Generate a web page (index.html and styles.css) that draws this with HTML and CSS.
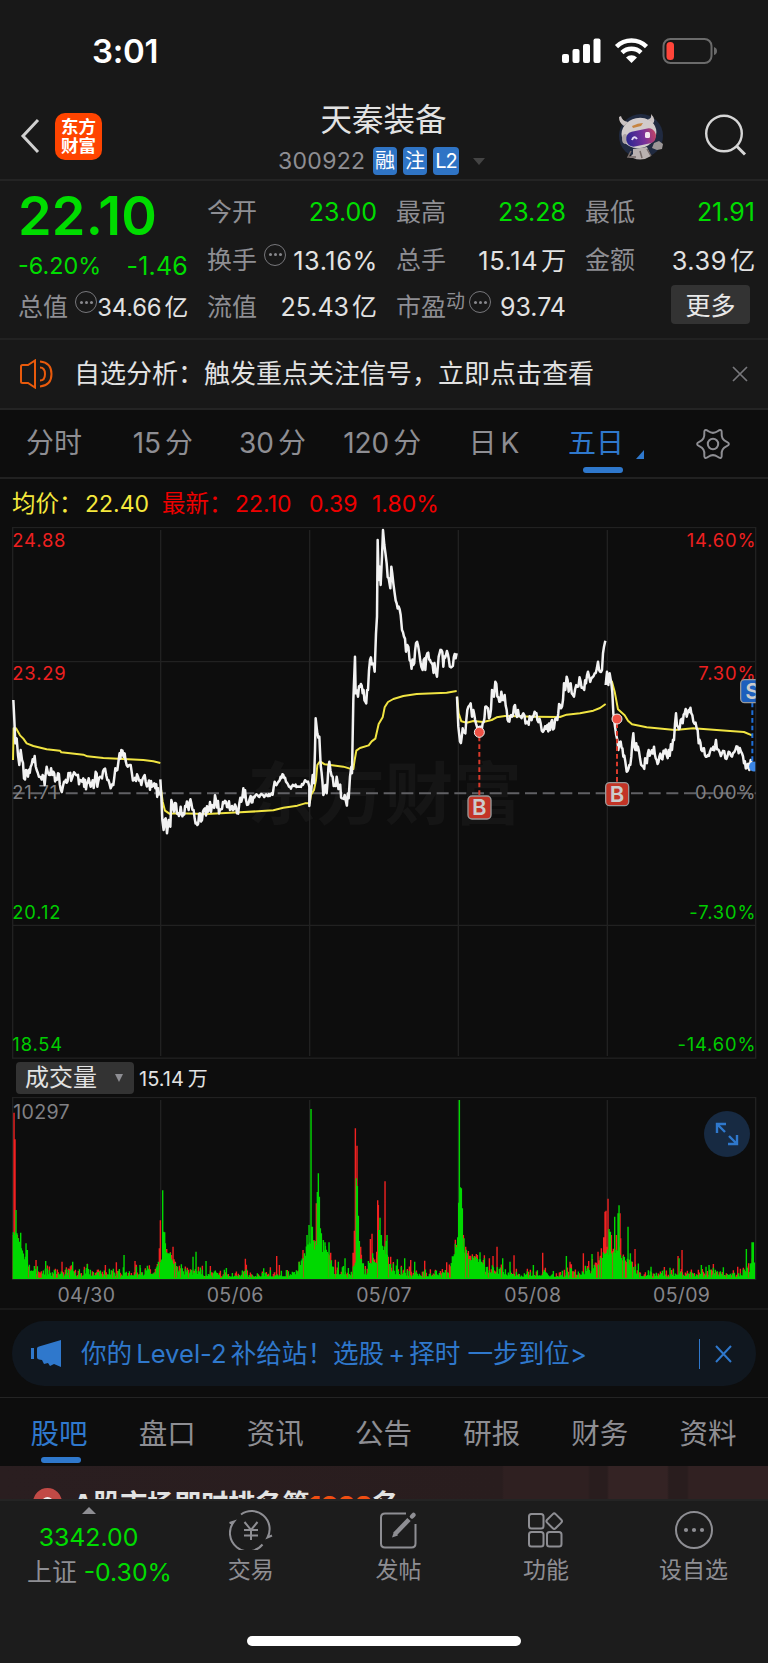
FILE: index.html
```html
<!DOCTYPE html>
<html lang="zh-CN">
<head>
    <meta charset="UTF-8">
    <meta name="viewport" content="width=device-width, initial-scale=1.0">
    <title>天秦装备 300922</title>
    <link rel="stylesheet" href="styles.css">
</head>
<body>

    <div class="status-bar">
        <span class="clock">3:01</span>
        <svg class="status-icons" width="156" height="26" viewBox="0 0 156 26">
            <g fill="#fff">
                <rect x="0" y="16" width="7" height="9" rx="2"/>
                <rect x="10.5" y="11" width="7" height="14" rx="2"/>
                <rect x="21" y="6" width="7" height="19" rx="2"/>
                <rect x="31.5" y="0.5" width="7" height="24.500" rx="2"/>
            </g>
            <g fill="none" stroke="#fff" stroke-width="4.500">
                <path d="M54.500 8.600a21.500 21.500 0 0 1 30 0"/>
                <path d="M60 14.600a13.700 13.700 0 0 1 19 0"/>
            </g>
            <path d="M64 19.500a8 8 0 0 1 11 0l-5.500 5.500z" fill="#fff"/>
            <rect x="101.500" y="1" width="48" height="24" rx="7" fill="none" stroke="#6b6b6b" stroke-width="2"/>
            <rect x="104.500" y="4" width="7.500" height="18" rx="3.500" fill="#ff453a"/>
            <path d="M152 9v8q3-1 3-4t-3-4z" fill="#6b6b6b"/>
        </svg>
    </div>

    <header class="header">
        <div class="header-left">
            <svg width="20" height="36" viewBox="0 0 20 36"><path d="M18 2L3 18l15 16" fill="none" stroke="#d0d0d0" stroke-width="3"/></svg>
            <div class="logo"><span>东方</span><span>财富</span></div>
        </div>
        <div class="header-title">
            <h1>天秦装备</h1>
            <div class="code-row">
                <span class="code">300922</span>
                <span class="tag">融</span><span class="tag">注</span><span class="tag">L2</span>
                <i class="arrow-down"></i>
            </div>
        </div>
        <div class="header-right">
            <svg class="robot" width="48" height="48" viewBox="0 0 48 48">
                <defs>
                    <linearGradient id="visor" x1="0" y1="0" x2="1" y2="0">
                        <stop offset="0" stop-color="#2b2690"/>
                        <stop offset="0.6" stop-color="#78309a"/>
                        <stop offset="1" stop-color="#c04466"/>
                    </linearGradient>
                </defs>
                <circle cx="24" cy="23" r="22" fill="#202a40"/>
                <path d="M2 4q0 6 5 9l4-4Q5 8 4 3zM31 6q4 0 3-5 6 6 1 11z" fill="#c9c2c2"/>
                <path d="M16 36l14-2 4 9q-9 6-18 2l-4 0 4-4z" fill="#b9b1b0"/>
                <path d="M14 38l-3 6 8 0M23 38l2 7M30 36l4 7" fill="none" stroke="#756a68" stroke-width="1.500"/>
                <path d="M37 30l5-2 4 3-1 5-5 1-5-2z" fill="#9b9696"/>
                <ellipse cx="22" cy="20" rx="17.500" ry="15" transform="rotate(-12 22 20)" fill="#d1cbcb"/>
                <ellipse cx="8" cy="26" rx="3" ry="5" fill="#aaa2a5"/>
                <rect x="9" y="17" width="30" height="15" rx="7" transform="rotate(-12 24 24)" fill="url(#visor)"/>
                <path d="M15 27q2-5 5-1" fill="none" stroke="#e4d8f5" stroke-width="2"/>
                <rect x="28" y="19" width="5" height="6" rx="1.500" fill="#f3e4ef"/>
                <path d="M15 13q6-3 11-3l-2 3-8 2z" fill="#c6843f"/>
            </svg>
            <svg width="42" height="42" viewBox="0 0 42 42"><g fill="none" stroke="#d6d6d6" stroke-width="2.400"><circle cx="19" cy="19.500" r="17.800"/><path d="M31.500 32l8.500 8.500" stroke-width="3"/></g></svg>
        </div>
    </header>

    <section class="quote">
        <div class="quote-col">
            <div class="price">22.10</div>
            <div class="change green"><span>-6.20%</span><span class="diff">-1.46</span></div>
            <div class="item"><label>总值</label><i class="more-dot"></i><b class="small">34.66<em>亿</em></b></div>
        </div>
        <div class="quote-col">
            <div class="item"><label>今开</label><b class="green">23.00</b></div>
            <div class="item"><label>换手</label><i class="more-dot"></i><b class="wide">13.16%</b></div>
            <div class="item"><label>流值</label><b>25.43<em>亿</em></b></div>
        </div>
        <div class="quote-col">
            <div class="item"><label>最高</label><b class="green">23.28</b></div>
            <div class="item"><label>总手</label><b class="wide">15.14<em>万</em></b></div>
            <div class="item"><label>市盈<sup>动</sup></label><i class="more-dot tight"></i><b>93.74</b></div>
        </div>
        <div class="quote-col">
            <div class="item"><label>最低</label><b class="green">21.91</b></div>
            <div class="item"><label>金额</label><b class="wide">3.39<em>亿</em></b></div>
            <div class="item"><button class="btn-more">更多</button></div>
        </div>
    </section>

    <section class="notice">
        <svg width="36" height="30" viewBox="0 0 36 30"><g fill="none" stroke="#e85a0c" stroke-width="2"><path d="M2 7.500q0-1.500 1.500-1.500H9l7-4.500v27L9 24H3.500Q2 24 2 22.500z"/><path d="M21 8.500q5 0 5 6.500t-5 6.500M21 2.500q11.500 1 11.500 12.500T21 27.500"/></g></svg>
        <p>自选分析：触发重点关注信号，立即点击查看</p>
        <svg width="16" height="16" viewBox="0 0 16 16"><path d="M1 1l14 14M15 1L1 15" stroke="#77777b" stroke-width="1.700"/></svg>
    </section>

    <nav class="period-tabs">
        <span>分时</span>
        <span>15<em>分</em></span>
        <span>30<em>分</em></span>
        <span>120<em>分</em></span>
        <span class="day">日<em>K</em></span>
        <span class="active">五日<i class="corner"></i></span>
        <span class="gear"><svg width="34" height="32" viewBox="-1 0 34 32"><g fill="none" stroke="#8e8e93" stroke-width="2"><path d="M29.350 13.600Q34.500 16 29.350 18.400Q24.200 20.750 24.700 26.400Q25.250 32 20.600 28.750Q16 25.500 11.400 28.750Q6.750 32 7.300 26.400Q7.800 20.750 2.650 18.400Q-2.500 16 2.650 13.600Q7.800 11.250 7.300 5.600Q6.750 0 11.400 3.250Q16 6.500 20.600 3.250Q25.250 0 24.700 5.600Q24.200 11.250 29.350 13.600Z"/><circle cx="16" cy="16" r="5.200"/></g></svg></span>
    </nav>

    <div class="chart-info">
        <span class="avg">均价：</span><span class="avg v1">22.40</span>
        <span class="new">最新：</span><span class="new v2">22.10</span><span class="new v3">0.39</span><span class="new v4">1.80%</span>
    </div>

    <!-- Gráfico de preço: 3 unidades por pixel -->
    <svg class="price-chart" viewBox="0 21 2304 1596">
        <text class="watermark" x="742" y="898">东方财富</text>
        <g class="grid">
            <rect x="38" y="22.500" width="2229" height="1592"/>
            <path d="M38 425H2267M38 1216H2267M482 30V1608M929 30V1608M1375 30V1608M1822 30V1608"/>
        </g>
        <path class="zero" d="M38 820H2267"/>
        <g class="axis">
            <text class="up" x="37" y="81">24.88</text>
            <text class="up" x="37" y="479">23.29</text>
            <text x="37" y="838">21.71</text>
            <text class="down" x="37" y="1196">20.12</text>
            <text class="down" x="37" y="1593">18.54</text>
        </g>
        <g class="axis right">
            <text class="up" x="2269" y="81">14.60%</text>
            <text class="up" x="2269" y="479">7.30%</text>
            <text x="2269" y="838">0.00%</text>
            <text class="down" x="2269" y="1196">-7.30%</text>
            <text class="down" x="2269" y="1593">-14.60%</text>
        </g>
        <g class="avg-line">
            <path d="M39 720L41 625L48 625L60 646L70 656L80 670L100 678L140 688L180 692L184 697L250 704L262 709L310 714L370 717L430 720L460 724L481 729"/>
            <path d="M482 800L488 845L495 872L508 881L530 880L620 882L720 877L820 871L850 863L892 857L915 850L927 850"/>
            <path d="M929 850L933 825L942 810L948 780L952 735L960 724L974 733L1030 740L1050 746L1060 747L1064 720L1069 692L1080 684L1106 676L1115 664L1126 656L1136 612L1148 592L1154 562L1164 546L1180 537L1210 528L1250 522L1340 518L1370 513"/>
            <path d="M1371 530L1376 580L1384 604L1400 608L1420 603L1450 606L1475 600L1490 592L1515 588L1600 590L1680 591L1700 584L1740 580L1780 572L1800 564L1817 552"/>
            <path d="M1822 470L1836 485L1844 515L1854 568L1874 586L1884 602L1896 613L1940 622L2025 630L2080 625L2180 632L2232 636L2258 647"/>
        </g>
        <g class="price-line" id="priceLine"></g>
        <path class="buy-line" d="M1438 650V828M1851 610V788"/>
        <path class="sell-line" d="M2257 548V735"/>
        <circle class="buy-dot" cx="1438" cy="637" r="15"/>
        <circle class="buy-dot" cx="1851" cy="597" r="15"/>
        <path class="sell-dot" d="M2266 725A15 15 0 1 0 2266 754Z"/>
        <g class="mark">
            <rect x="1404" y="828" width="69" height="69" rx="12"/><text x="1438" y="886">B</text>
            <rect x="1817" y="788" width="69" height="69" rx="12"/><text x="1851" y="846">B</text>
        </g>
        <svg x="2200" y="470" width="67" height="90" viewBox="2200 470 67 90">
            <g class="mark sell"><rect x="2222" y="479" width="69" height="69" rx="12"/><text x="2257" y="536">S</text></g>
        </svg>
    </svg>

    <div class="volume-head">
        <div class="select">成交量<i class="arrow-down"></i></div>
        <span>15.14<em>万</em></span>
    </div>

    <div class="volume-wrap">
        <svg class="volume-chart" viewBox="0 141 2304 549">
            <g class="grid">
                <rect x="38" y="142.500" width="2229" height="546"/>
                <path d="M482 150V688M929 150V688M1375 150V688M1822 150V688"/>
            </g>
            <text class="vol-max" x="40" y="207">10297</text>
            <path id="volUp" fill="#f22121"/>
            <path id="volDown" fill="#00d900"/>
        </svg>
        <button class="expand"><svg width="24" height="24" viewBox="0 0 24 24"><path d="M2 11V2H11M2 2l8 8M13 22h9V13M22 22l-8-8" fill="none" stroke="#2f78cc" stroke-width="2.400"/></svg></button>
    </div>

    <div class="dates">
        <span>04/30</span><span>05/06</span><span>05/07</span><span>05/08</span><span>05/09</span>
    </div>

    <div class="banner-wrap">
        <div class="banner">
            <svg width="31" height="27" viewBox="0 0 31 27"><path d="M0 8h3v11H0zM6 8.500Q6 7 8 6.500L30 0v27l-7-3-4 2-2-3-4 1-2-4-3-.500q-2-.500-2-2z" fill="#2f78cc"/></svg>
            <p>你的<em>Level-2</em>补给站！选股<em>+</em>择时 一步到位&gt;</p>
            <i class="divider"></i>
            <svg width="18" height="18" viewBox="0 0 18 18"><path d="M1 1l15 16M16 1L1 17" stroke="#2f78cc" stroke-width="2"/></svg>
        </div>
    </div>

    <nav class="section-tabs">
        <span class="active">股吧</span><span>盘口</span><span>资讯</span><span>公告</span><span>研报</span><span>财务</span><span>资料</span>
    </nav>

    <div class="promo">
        <div class="promo-icon"></div>
        <p>A股市场即时排名第<b>1098</b>名 ›</p>
    </div>

    <footer class="bottom-nav">
        <div class="index">
            <i class="arrow-up"></i>
            <strong>3342.00</strong>
            <div><span>上证</span><b>-0.30%</b></div>
        </div>
        <div class="nav-item">
            <svg width="44" height="40" viewBox="0 0 44 40"><g fill="none" stroke="#8e8e93" stroke-width="2"><path d="M12 4.500A18 18 0 0 1 38.500 27.500L43 25.500M33.500 34.500A18 18 0 0 1 5 11.500L0.500 13"/><path d="M15.500 12l6.500 8 6.500-8M22 20v10M15 20h14M15 25.500h14"/></g></svg>
            <span>交易</span>
        </div>
        <div class="nav-item">
            <svg width="40" height="40" viewBox="0 0 40 40"><g fill="none" stroke="#8e8e93" stroke-width="2"><path d="M28 3.500H7q-4 0-4 4v26q0 4 4 4h26.500q4 0 4-4V14"/><path d="M17 24L31 9.500" stroke-width="4.500"/><path d="M34 6.500L35.500 5" stroke-width="4.500" stroke-linecap="round"/></g><path d="M14 27.500l2-6 4 4z" fill="#8e8e93"/></svg>
            <span>发帖</span>
        </div>
        <div class="nav-item">
            <svg width="40" height="40" viewBox="0 0 40 40"><g fill="none" stroke="#8e8e93" stroke-width="2"><rect x="3" y="4" width="14.500" height="14.500" rx="2.500"/><rect x="3" y="22" width="14.500" height="14.500" rx="2.500"/><rect x="21" y="22" width="14.500" height="14.500" rx="2.500"/><rect x="22.200" y="5.200" width="12" height="12" rx="2" transform="rotate(45 28.200 11.200)"/></g></svg>
            <span>功能</span>
        </div>
        <div class="nav-item">
            <svg width="40" height="40" viewBox="0 0 40 40"><circle cx="20" cy="20" r="18" fill="none" stroke="#8e8e93" stroke-width="2"/><g fill="#8e8e93"><circle cx="12" cy="20" r="2.100"/><circle cx="20" cy="20" r="2.100"/><circle cx="28" cy="20" r="2.100"/></g></svg>
            <span>设自选</span>
        </div>
        <div class="home-indicator"></div>
    </footer>

    <script src="chart.js"></script>
</body>
</html>
```
FILE: styles.css
```css
* {
    box-sizing: border-box;
}
body {
    margin: 0;
    width: 768px;
    height: 1663px;
    overflow: hidden;
    background: #0d0d0d;
    color: #e2e2e2;
    font-family: 'Inter', 'Noto Sans CJK SC', sans-serif;
}
svg {
    display: block;
    flex: none;
}
em, i {
    font-style: normal;
}
h1, p {
    margin: 0;
    font-weight: 400;
}
.green {
    color: #00dc00;
}

/* Barra de status */
.status-bar {
    height: 98px;
    padding: 38px 50px 0 92px;
    display: flex;
    justify-content: space-between;
    background: #181818;
}
.clock {
    font-size: 33px;
    line-height: 27px;
    font-weight: 600;
    color: #fff;
    letter-spacing: -0.3px;
}

/* Cabeçalho */
.header {
    height: 83px;
    display: grid;
    grid-template-columns: 204px 360px 204px;
    background: #181818;
    border-bottom: 2px solid #242424;
}
.header-left {
    display: flex;
    align-items: center;
    padding: 0 0 10px 20px;
    gap: 15px;
}
.logo {
    width: 47px;
    height: 47px;
    border-radius: 10px;
    background: #ff4400;
    color: #fff;
    font-size: 17.5px;
    line-height: 19px;
    font-weight: 700;
    display: flex;
    flex-direction: column;
    align-items: center;
    justify-content: center;
}
.header-title {
    padding-top: 4px;
}
.header-title h1 {
    font-size: 31.5px;
    line-height: 36px;
    text-align: center;
    margin-left: -1px;
}
.code-row {
    display: flex;
    align-items: center;
    height: 46px;
    padding-left: 74px;
}
.code {
    width: 95px;
    font-size: 23px;
    color: #8e8e93;
    letter-spacing: 0.3px;
}
.tag {
    width: 24px;
    height: 28px;
    margin-right: 6px;
    border-radius: 4px;
    background: #2f74c5;
    color: #fff;
    font-size: 20px;
    line-height: 28px;
    text-align: center;
}
.tag:nth-child(4) {
    width: 26px;
    letter-spacing: -1px;
}
.arrow-down {
    border: 6px solid transparent;
    border-top: 7px solid #444;
    border-bottom: 0;
}
.code-row .arrow-down {
    margin-left: 8px;
}
.header-right {
    display: flex;
    padding: 16px 0 0 53px;
    gap: 40px;
}
.robot {
    margin-top: -1px;
}

/* Cotação */
.quote {
    height: 159px;
    padding: 8px 13px 0 18px;
    display: grid;
    grid-template-columns: 170px repeat(3, 169px);
    column-gap: 20px;
    background: #181818;
    border-bottom: 2px solid #222;
}
.quote-col:not(:first-child) {
    margin-left: -1px;
}
.price {
    height: 55px;
    font-size: 54px;
    line-height: 53px;
    font-weight: 600;
    letter-spacing: 0.2px;
    color: #00dc00;
}
.change {
    height: 40px;
    line-height: 44px;
    font-size: 23.4px;
    display: flex;
    justify-content: space-between;
}
.diff {
    font-size: 25px;
    letter-spacing: 0.2px;
}
.item {
    display: flex;
    height: 47.5px;
    line-height: 47px;
    font-size: 25px;
    white-space: nowrap;
}
.item label {
    color: #8e8e93;
}
.item b {
    margin-left: auto;
    font-weight: 400;
}
.item .small {
    font-size: 23.8px;
    letter-spacing: -0.2px;
}
.item .wide {
    font-size: 25.3px;
    letter-spacing: 0.6px;
    margin-right: -1px;
}
.item em {
    margin-left: 3px;
}
.item sup {
    font-size: 19px;
    line-height: 0;
    vertical-align: 8px;
}
.more-dot {
    width: 22px;
    height: 22px;
    margin: 7px 0 0 7px;
    border: 1.5px solid #77777b;
    border-radius: 50%;
    display: flex;
    flex: none;
    align-items: center;
    justify-content: center;
}
.more-dot.tight {
    margin-left: 4px;
}
.more-dot::before {
    content: "";
    width: 3px;
    height: 3px;
    border-radius: 50%;
    background: #88888c;
    box-shadow: -5px 0 #88888c, 5px 0 #88888c;
}
.btn-more {
    width: 79px;
    height: 39px;
    margin: 1px 5px 0 auto;
    padding: 0;
    border: none;
    border-radius: 4px;
    background: #333;
    color: #e8e8e8;
    font: 25px/37px 'Noto Sans CJK SC', sans-serif;
}

/* Aviso */
.notice {
    height: 70px;
    padding: 0 20px 1px 19px;
    display: flex;
    align-items: center;
    background: #181818;
    border-bottom: 2px solid #242424;
}
.notice p {
    flex: 1;
    padding-left: 19px;
    font-size: 26px;
    line-height: 34px;
}

/* Abas de período */
.period-tabs {
    height: 69px;
    display: grid;
    grid-template-columns: 108px repeat(4, 109.7px) 111.5px 109px;
    line-height: 67px;
    text-align: center;
    font-size: 28px;
    color: #8e8e93;
    border-bottom: 2px solid #212121;
}
.period-tabs em {
    margin-left: 4px;
}
.period-tabs span {
    position: relative;
}
.period-tabs .day {
    padding-left: 4px;
}
.period-tabs .active {
    color: #2f78cc;
    padding-right: 13px;
}
.period-tabs .active::after,
.section-tabs .active::after {
    content: "";
    position: absolute;
    left: 36px;
    bottom: 4px;
    width: 40px;
    height: 6px;
    border-radius: 3px;
    background: #2f78cc;
}
.corner {
    position: absolute;
    right: 14px;
    bottom: 18px;
    border-left: 8px solid transparent;
    border-bottom: 9px solid #2f78cc;
}
.gear {
    display: flex;
    align-items: center;
    justify-content: center;
}

/* Informações do gráfico */
.chart-info {
    height: 48px;
    padding-left: 12px;
    display: flex;
    line-height: 50px;
    font-size: 23.5px;
}
.avg {
    color: #f5e83c;
    width: 73px;
}
.new {
    color: #ee0000;
    width: 73px;
}
.chart-info .v1 {
    width: 77px;
}
.chart-info .v2 {
    width: 74px;
}
.chart-info .v3 {
    width: 63px;
}
.v1, .v2, .v3, .v4 {
    font-size: 23px;
}

/* Gráfico de preço */
.price-chart {
    width: 768px;
    height: 532px;
}
.grid rect, .grid path {
    fill: none;
    stroke: #212121;
    stroke-width: 4;
}
.zero {
    stroke: #606064;
    stroke-width: 6;
    stroke-dasharray: 36 17;
}
.watermark {
    font-family: 'Noto Sans CJK SC', sans-serif;
    font-size: 206px;
    font-weight: 700;
    fill: #151515;
}
.axis text, .vol-max {
    font-size: 55px;
    letter-spacing: 2.6px;
    fill: #808084;
}
.axis .up {
    fill: #ee2020;
}
.axis .down {
    fill: #00cc00;
}
.right text {
    text-anchor: end;
}
.avg-line path {
    fill: none;
    stroke: #f0e442;
    stroke-width: 6;
    stroke-linejoin: round;
}
.price-line path {
    fill: none;
    stroke: #f2f2f2;
    stroke-width: 7.5;
    stroke-linejoin: round;
}
.buy-line, .sell-line {
    stroke: #d83a2b;
    stroke-width: 6;
    stroke-dasharray: 14 9;
}
.sell-line {
    stroke: #1f6fd8;
}
.buy-dot {
    fill: #ee5145;
    stroke: #eee;
    stroke-width: 3;
}
.sell-dot {
    fill: #3b86e6;
}
.mark rect {
    fill: #c33426;
    stroke: #999;
    stroke-width: 4;
}
.mark.sell rect {
    fill: #1d5fbd;
}
.mark text {
    font-size: 66px;
    font-weight: 600;
    fill: #ccc;
    text-anchor: middle;
}

/* Volume */
.volume-head {
    height: 38px;
    padding: 3px 0 0 16px;
    display: flex;
    font-size: 20px;
    line-height: 34px;
}
.volume-head em {
    margin-left: 4px;
}
.select {
    width: 118px;
    height: 32px;
    margin-right: 5px;
    padding: 0 11px 0 9px;
    border-radius: 4px;
    background: #333;
    font-size: 24px;
    line-height: 32px;
    display: flex;
    align-items: center;
    justify-content: space-between;
}
.select .arrow-down {
    border-width: 8px 4.5px 0;
    border-top-color: #8e8e93;
    margin-bottom: 1px;
}
.volume-wrap {
    position: relative;
    height: 183px;
}
.volume-chart {
    width: 768px;
    height: 183px;
}
.vol-max {
    font-size: 59px;
    letter-spacing: 0.8px;
}
.expand {
    position: absolute;
    right: 18px;
    top: 14px;
    width: 46px;
    height: 46px;
    padding: 0;
    border: none;
    border-radius: 50%;
    background: #172a42;
    display: flex;
    align-items: center;
    justify-content: center;
}
.dates {
    height: 30px;
    padding: 0 12px;
    display: grid;
    grid-template-columns: repeat(5, 1fr);
    border-bottom: 2px solid #191919;
    font-size: 19.5px;
    line-height: 31px;
    letter-spacing: 0.3px;
    text-align: center;
    color: #85858a;
}

/* Banner */
.banner-wrap {
    height: 88px;
    padding: 11px 12px;
    border-bottom: 1px solid #242424;
}
.banner {
    height: 65px;
    padding: 0 23px 0 19px;
    border-radius: 33px;
    background: #10171f;
    display: flex;
    align-items: center;
    color: #2f78cc;
    font-size: 25.6px;
}
.banner p {
    flex: 1;
    padding-left: 19px;
    line-height: 40px;
    white-space: nowrap;
}
.banner em {
    margin: 0 4px;
}
.divider {
    width: 1.5px;
    height: 30px;
    margin-right: 15px;
    background: #2f78cc;
}

/* Abas inferiores */
.section-tabs {
    height: 68px;
    padding: 0 6px 0 5px;
    display: grid;
    grid-template-columns: repeat(7, 1fr);
    line-height: 71px;
    text-align: center;
    font-size: 28.5px;
    color: #8e8e93;
}
.section-tabs .active {
    position: relative;
    color: #2f78cc;
}
.section-tabs .active::after {
    bottom: 6px;
}
.promo {
    height: 33px;
    padding: 20px 0 0 33px;
    display: flex;
    gap: 11px;
    overflow: hidden;
    background: linear-gradient(90deg, #2a1e20 0, #291d1e 502px, #2f2021 504px, #2f2021 588px, #291d1e 590px, #291d1e 607px, #342324 609px, #342324 667px, #291d1e 669px, #291d1e 687px, #312122 689px);
}
.promo-icon {
    width: 29px;
    height: 29px;
    flex: none;
    margin-top: 2px;
    border: 9px solid #c14a46;
    border-radius: 50%;
    background: #eee;
}
.promo p {
    font-size: 27px;
    line-height: 37px;
    font-weight: 700;
    white-space: nowrap;
}
.promo b {
    color: #f04e12;
    font-size: 25px;
}

/* Menu inferior */
.bottom-nav {
    position: relative;
    height: 164px;
    display: grid;
    grid-template-columns: 177px repeat(4, 147.6px);
    background: #1c1c1c;
    border-top: 2px solid #242424;
    color: #8e8e93;
}
.index {
    display: flex;
    flex-direction: column;
    align-items: center;
    padding-top: 6px;
    font-size: 24.8px;
}
.index strong {
    font-weight: 400;
    line-height: 46px;
    color: #00dc00;
}
.index div {
    padding-left: 22px;
    line-height: 24px;
    white-space: nowrap;
}
.index b {
    margin-left: 7px;
    font-weight: 400;
    color: #00dc00;
}
.arrow-up {
    border: 7px solid transparent;
    border-top: 0;
    border-bottom: 7px solid #8e8e93;
}
.nav-item {
    display: flex;
    flex-direction: column;
    align-items: center;
    padding-top: 9px;
    font-size: 23px;
    line-height: 40px;
}
.home-indicator {
    position: absolute;
    left: 247px;
    top: 135px;
    width: 274px;
    height: 10px;
    border-radius: 5px;
    background: #fff;
}
```
FILE: chart.js
```js
// Pontos de preço de cada dia (x, y)
const dias = [
    "40,540 43,600 46,670 50,655 54,705 58,735 62,690 66,720 72,775 78,750 84,770 92,740 104,708 110,750 120,770 128,765 134,795 140,740 150,765 160,755 168,775 174,760 182,808 192,785 208,760 216,775 228,765 240,780 250,775 258,808 266,775 272,800 284,785 290,760 292,800 300,770 312,748 322,780 332,805 340,795 346,745 352,750 356,720 364,690 374,700 380,735 392,735 402,780 414,770 424,795 434,765 444,795 456,800 466,805 480,822",
    "481,778 484,830 487,900 491,930 497,895 501,940 506,900 511,920 514,840 522,875 528,850 534,880 542,860 550,880 558,860 566,870 574,850 584,895 592,915 600,880 606,900 612,868 624,875 636,855 648,840 660,870 672,850 684,862 696,858 711,880 718,850 724,845 730,805 738,840 748,840 752,828 760,830 772,825 790,826 818,824 824,785 832,790 842,770 850,765 858,785 870,800 884,798 900,800 912,788 924,785 928,800 928,858 934,810 938,765 942,790 945,690 947,595 952,640 958,650 962,735 970,825 976,795 980,820 988,725 998,770 1004,795 1010,770 1018,800 1026,835 1034,825 1038,845 1046,835 1050,770 1054,740 1056,760 1060,540 1065,410 1067,520 1074,530 1080,500 1088,520 1096,545 1104,510 1110,420 1118,430 1124,455 1128,340 1131,290 1133,60 1136,180 1139,140 1142,195 1146,110 1149,30 1153,75 1160,130 1166,175 1171,205 1174,140 1180,190 1184,220 1190,250 1196,260 1202,285 1206,330 1212,350 1218,395 1222,375 1232,425 1240,435 1248,370 1258,400 1264,440 1268,450 1274,415 1276,450 1282,400 1290,420 1298,435 1306,450 1311,470 1316,410 1324,390 1330,440 1338,405 1346,415 1356,440 1364,402 1370,400",
    "1371,530 1375,620 1380,665 1388,625 1396,640 1402,570 1412,550 1416,590 1420,570 1428,610 1440,620 1448,610 1456,560 1464,565 1470,590 1476,510 1482,530 1486,485 1492,530 1498,545 1504,515 1508,540 1514,525 1520,570 1528,605 1536,590 1542,560 1548,580 1554,570 1562,590 1570,580 1580,605 1592,595 1600,590 1604,575 1612,600 1622,610 1632,630 1642,615 1650,630 1656,600 1662,625 1672,600 1680,555 1686,560 1692,490 1696,510 1700,470 1706,515 1712,490 1722,530 1732,500 1742,485 1750,505 1758,490 1764,455 1774,475 1784,460 1794,425 1800,455 1806,450 1812,380 1816,362",
    "1817,495 1821,455 1825,495 1829,460 1834,490 1840,580 1845,620 1852,660 1855,690 1862,665 1870,710 1876,725 1880,755 1888,735 1894,710 1900,640 1906,690 1914,680 1920,715 1930,740 1938,725 1946,690 1952,700 1962,680 1970,720 1978,710 1984,715 1994,700 2000,705 2006,690 2016,690 2022,660 2028,580 2034,620 2042,600 2048,610 2054,580 2060,590 2066,570 2074,580 2080,605 2090,625 2096,670 2104,690 2112,685 2120,710 2130,695 2140,680 2148,660 2156,690 2166,700 2176,715 2186,695 2196,710 2206,690 2216,700 2226,700 2232,730 2240,745 2248,750 2252,720 2257,735"
];

// Base do volume (x:altura)
const base = "38:200 60:100 85:45 150:25 300:27 400:28 450:32 470:50 500:90 515:70 530:42 600:26 700:20 800:18 860:24 890:28 920:110 940:120 970:115 990:60 1005:34 1050:30 1075:80 1095:30 1110:60 1125:50 1140:130 1155:90 1170:45 1200:28 1300:18 1345:38 1365:110 1395:100 1410:75 1440:65 1455:35 1510:32 1560:18 1620:28 1680:14 1710:35 1740:30 1790:50 1815:100 1845:95 1870:75 1900:45 1925:20 2050:24 2150:24 2215:20 2240:38 2262:60";

// Picos de volume (x,topo,cor)
const picos = "42,188,r 45,268,r 40,555,r 48,480,g 51,550,g 55,565,r 62,548,g 78,580,g 82,600,g 108,630,r 137,633,g 186,635,r 218,635,g 262,642,g 316,645,r 349,637,r 372,615,g 405,633,r 420,645,g 478,595,r 481,511,r 488,421,g 491,545,g 494,547,g 496,580,g 500,597,r 506,610,g 511,608,g 519,590,r 522,628,r 579,620,g 588,605,g 618,633,g 736,626,r 791,655,g 830,618,r 838,645,r 897,635,g 909,600,r 921,555,g 927,525,g 933,177,g 937,530,g 942,570,r 946,577,r 949,460,r 952,426,g 955,370,g 958,440,g 961,535,g 964,550,g 970,570,g 975,577,g 987,577,g 992,608,r 1015,635,g 1035,625,g 1059,608,r 1063,542,r 1066,235,r 1071,287,r 1069,385,g 1072,408,g 1075,497,g 1078,573,g 1082,590,r 1105,633,g 1111,567,r 1116,551,r 1118,610,g 1130,605,r 1133,451,r 1135,465,r 1136,540,g 1140,503,g 1144,555,g 1155,394,r 1158,573,g 1161,555,g 1172,620,r 1192,628,g 1214,625,g 1232,630,r 1244,635,g 1274,632,r 1340,637,r 1369,585,r 1373,562,g 1376,458,g 1378,150,g 1381,412,g 1384,415,g 1387,475,g 1390,555,r 1392,565,g 1397,590,r 1405,603,r 1440,607,g 1468,625,r 1479,618,r 1491,590,r 1508,625,g 1530,635,g 1542,616,r 1600,645,g 1628,608,r 1699,618,g 1710,635,r 1750,610,r 1766,633,r 1776,612,g 1794,605,r 1804,595,r 1811,562,r 1815,485,r 1818,482,r 1824,446,r 1827,537,g 1831,545,g 1834,555,r 1844,500,g 1849,555,r 1854,490,g 1857,466,g 1860,490,r 1862,565,r 1884,530,g 1891,610,g 1905,597,r 1897,635,r 1953,650,g 2010,653,g 2034,618,r 2037,625,g 2046,600,r 2104,645,g 2118,650,g 2127,645,g 2170,652,g 2213,650,r 2239,597,g 2246,640,r 2256,577,g 2260,577,g";

let seed = 7;
function rnd() {
    seed = (seed * 16807) % 2147483647;
    return seed / 2147483647;
}

function desenharPreco() {
    const alvo = document.getElementById("priceLine");
    dias.forEach(function(dia) {
        const p = dia.split(" ").map(s => s.split(",").map(Number));
        let d = "M" + p[0];
        for (let i = 1; i < p.length; i++) {
            const [x0, y0] = p[i - 1];
            const [x1, y1] = p[i];
            const n = Math.floor((x1 - x0) / 2.6);
            for (let k = 1; k < n; k++) {
                const y = y0 + (y1 - y0) * k / n + (rnd() - 0.5) * (x1 > 760 && x1 < 925 ? 14 : 38);
                d += "L" + (x0 + (x1 - x0) * k / n).toFixed(1) + "," + y.toFixed(1);
            }
            d += "L" + x1 + "," + y1;
        }
        const path = document.createElementNS("http://www.w3.org/2000/svg", "path");
        path.setAttribute("d", d);
        alvo.appendChild(path);
    });
}

function desenharVolume() {
    const b = base.split(" ").map(s => s.split(":").map(Number));
    let up = "", down = "";
    const barra = (x, h) => "M" + x + " 687v" + (-h).toFixed(1) + "h4.2v" + h.toFixed(1) + "z";
    for (let x = 38; x < 2263; x += 3) {
        let i = 1;
        while (i < b.length - 1 && b[i][0] < x) i++;
        const t = Math.min(1, (x - b[i - 1][0]) / (b[i][0] - b[i - 1][0]));
        const topo = b[i - 1][1] + (b[i][1] - b[i - 1][1]) * t;
        const fator = topo > 45 ? 0.7 + rnd() * 0.3 : 0.35 + rnd() * rnd() * 1.2;
        // algumas barras totalmente vermelhas
        if (rnd() < 0.13) {
            down += barra(x, 4);
            up += barra(x, topo * fator);
        } else {
            down += barra(x, topo * fator);
        }
        if (rnd() < 0.3) {
            up += barra(x, topo * fator + 3 + rnd() * 11);
        }
    }
    picos.split(" ").forEach(function(s) {
        const [x, y, cor] = s.split(",");
        if (cor === "r") {
            up += barra(x - 2, 687 - y);
        } else {
            down += barra(x - 2, 687 - y);
        }
    });
    document.getElementById("volUp").setAttribute("d", up);
    document.getElementById("volDown").setAttribute("d", down);
}

desenharPreco();
desenharVolume();
```
